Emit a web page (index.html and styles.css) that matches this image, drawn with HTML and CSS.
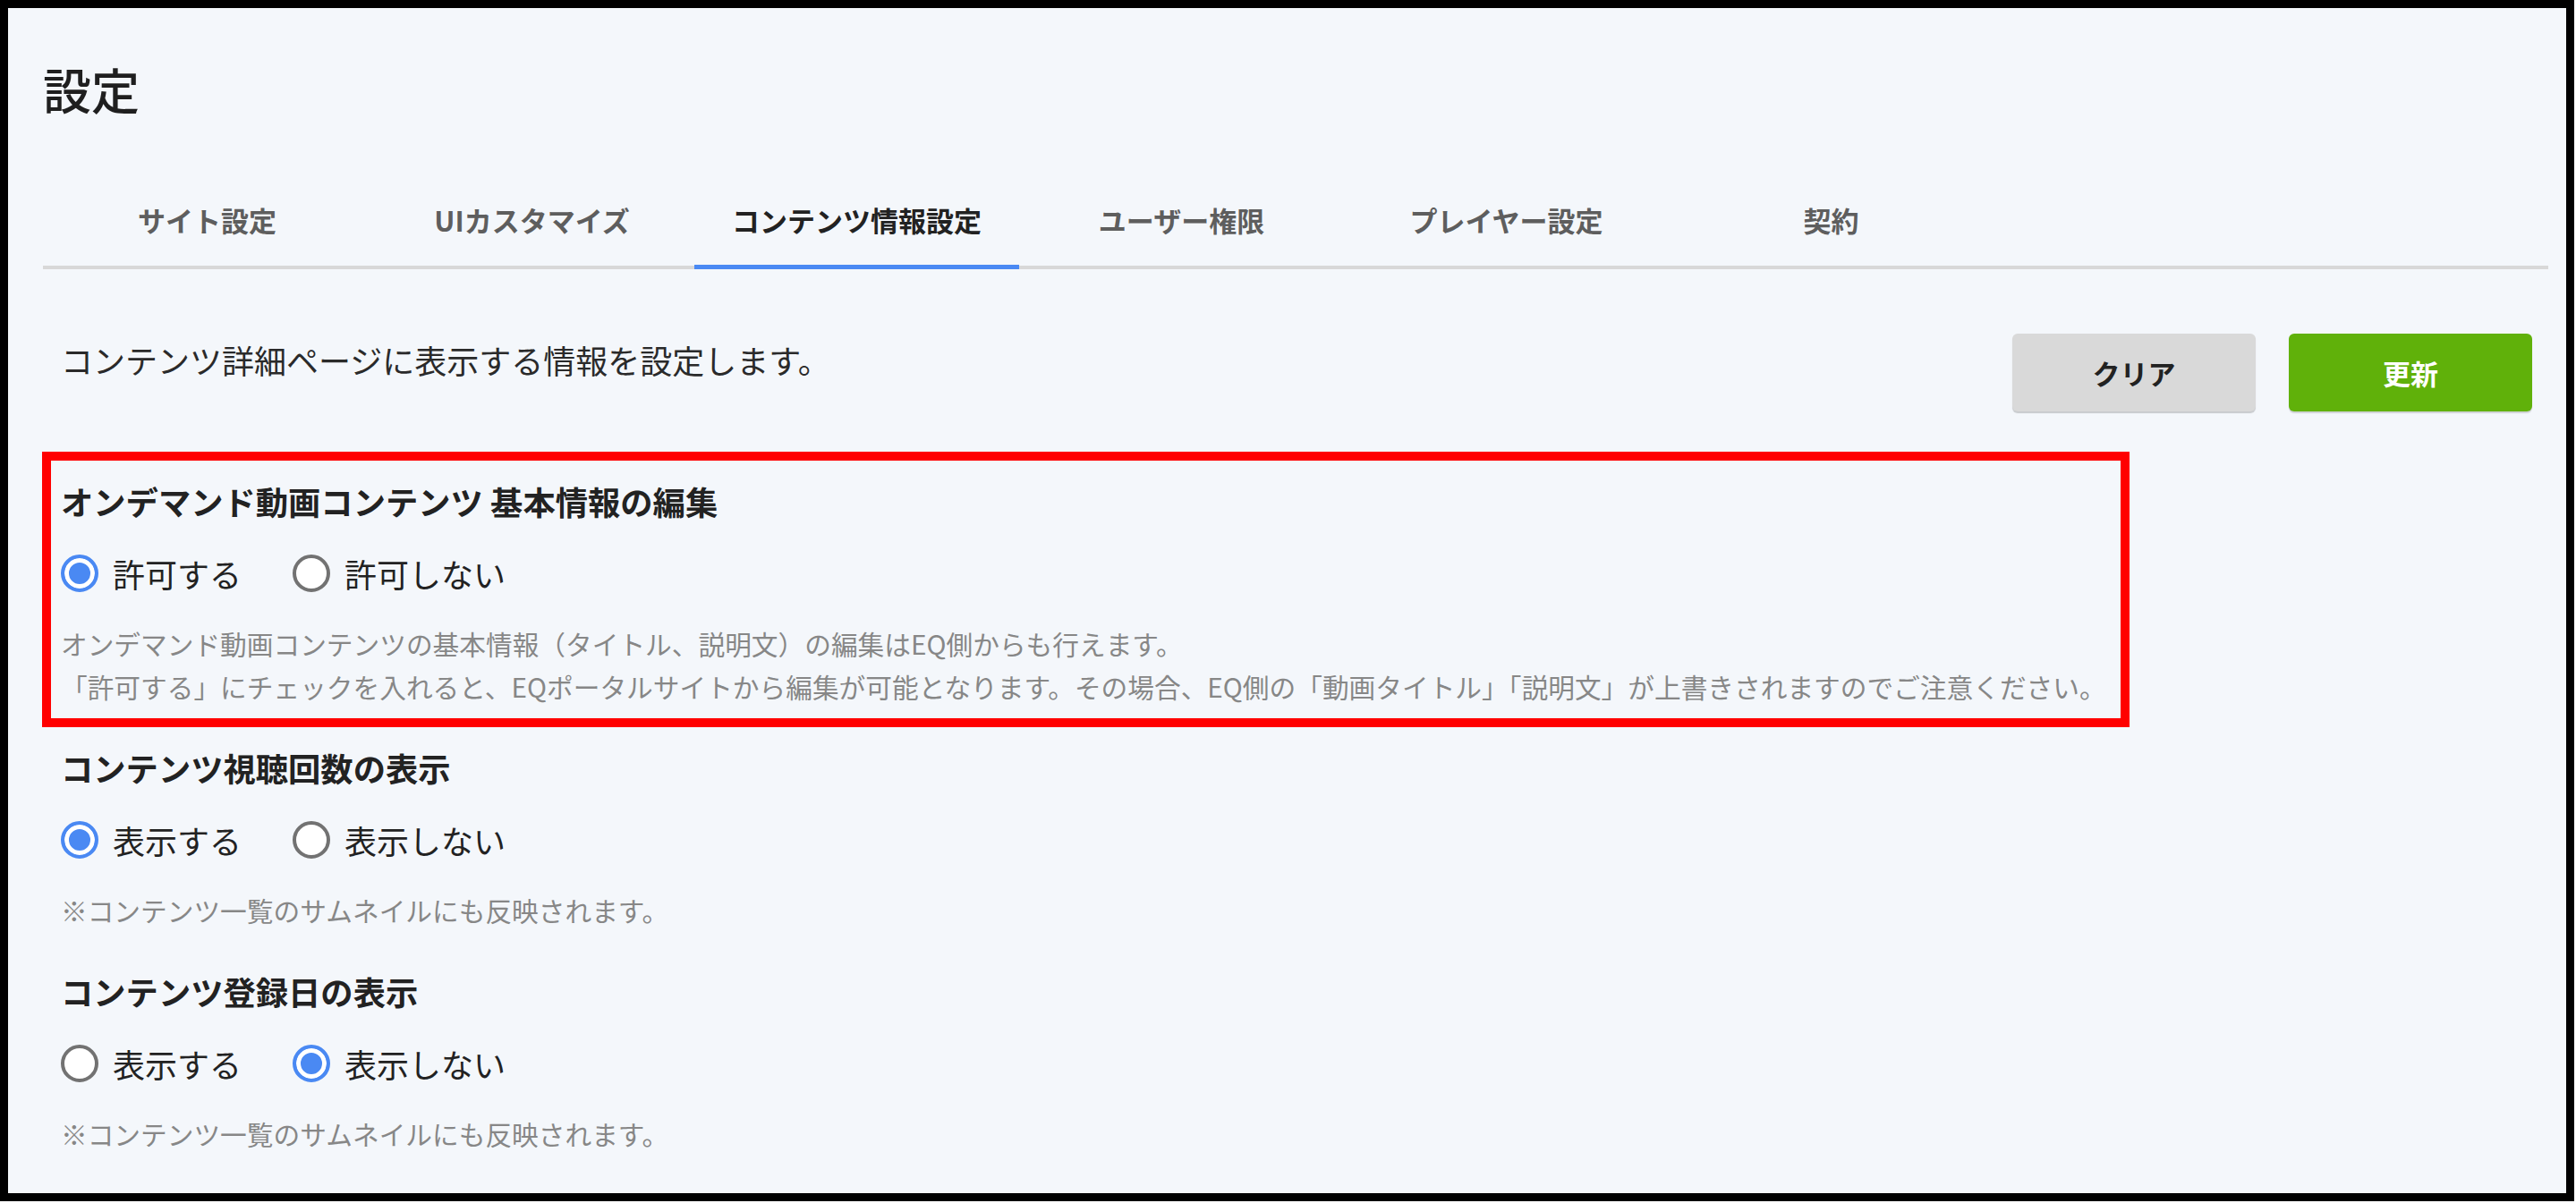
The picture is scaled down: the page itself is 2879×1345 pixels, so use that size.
FILE: index.html
```html
<!DOCTYPE html>
<html lang="ja">
<head>
    <meta charset="UTF-8">
    <meta name="viewport" content="width=device-width, initial-scale=1.0">
    <title>設定</title>
    <link rel="stylesheet" href="styles.css">
</head>
<body>
    <div class="frame">
        <h1 class="page-title">設定</h1>

        <nav class="tabs">
            <a class="tab">サイト設定</a>
            <a class="tab">UIカスタマイズ</a>
            <a class="tab active">コンテンツ情報設定</a>
            <a class="tab">ユーザー権限</a>
            <a class="tab">プレイヤー設定</a>
            <a class="tab">契約</a>
        </nav>

        <div class="panel">
            <div class="panel-head">
                <p class="lead">コンテンツ詳細ページに表示する情報を設定します。</p>
                <div class="actions">
                    <button type="button" class="btn btn-clear">クリア</button>
                    <button type="button" class="btn btn-update">更新</button>
                </div>
            </div>

            <section class="setting highlight">
                <h3 class="setting-title">オンデマンド動画コンテンツ 基本情報の編集</h3>
                <div class="options">
                    <label class="option"><input type="radio" name="editInfo" checked><span>許可する</span></label>
                    <label class="option"><input type="radio" name="editInfo"><span>許可しない</span></label>
                </div>
                <p class="note">オンデマンド動画コンテンツの基本情報（タイトル、説明文）の編集はEQ側からも行えます。<br>「許可する」にチェックを入れると、EQポータルサイトから編集が可能となります。その場合、EQ側の「動画タイトル」「説明文」が上書きされますのでご注意ください。</p>
            </section>

            <section class="setting">
                <h3 class="setting-title">コンテンツ視聴回数の表示</h3>
                <div class="options">
                    <label class="option"><input type="radio" name="viewCount" checked><span>表示する</span></label>
                    <label class="option"><input type="radio" name="viewCount"><span>表示しない</span></label>
                </div>
                <p class="note">※コンテンツ一覧のサムネイルにも反映されます。</p>
            </section>

            <section class="setting">
                <h3 class="setting-title">コンテンツ登録日の表示</h3>
                <div class="options">
                    <label class="option"><input type="radio" name="createdAt"><span>表示する</span></label>
                    <label class="option"><input type="radio" name="createdAt" checked><span>表示しない</span></label>
                </div>
                <p class="note">※コンテンツ一覧のサムネイルにも反映されます。</p>
            </section>
        </div>
    </div>
</body>
</html>
```

FILE: styles.css
```css
html, body {
    margin: 0;
    padding: 0;
    background-color: #fff;
}
body {
    font-family: "Noto Sans CJK JP", "Noto Sans", sans-serif;
    color: #222;
}
.frame {
    box-sizing: border-box;
    width: 2877px;
    height: 1343px;
    border: 9px solid #000;
    background-color: #f4f7fb;
    padding: 59px 20px 0 39px;
    overflow: hidden;
}
.page-title {
    margin: 0;
    font-size: 54px;
    line-height: 64px;
    font-weight: 500;
    color: #1f1f1f;
}

/* tabs */
.tabs {
    display: flex;
    margin-top: 82px;
    padding-left: 2px;
    border-bottom: 4px solid #d8d8d8;
}
.tab {
    width: 363px;
    text-align: center;
    font-size: 31px;
    line-height: 44px;
    font-weight: 700;
    color: #5e5e5e;
    padding: 10px 0 28px;
    border-bottom: 5px solid transparent;
    margin-bottom: -4px;
    cursor: pointer;
}
.tab.active {
    color: #222;
    border-bottom-color: #4a89f3;
}

/* panel */
.panel {
    padding: 0 18px 0 20px;
}
.panel-head {
    display: flex;
    justify-content: space-between;
    align-items: flex-start;
    margin-top: 72px;
}
.lead {
    margin: 4px 0 0;
    font-size: 36px;
    line-height: 50px;
    color: #2a2a2a;
}
.actions {
    display: flex;
    gap: 37px;
}
.btn {
    width: 272px;
    height: 87px;
    border: none;
    border-radius: 6px;
    font-family: inherit;
    font-size: 31px;
    font-weight: 700;
    cursor: pointer;
}
.btn-clear {
    background-color: #d9d9d9;
    color: #222;
    box-shadow: 0 2px 1px rgba(0, 0, 0, 0.18);
}
.btn-update {
    background-color: #60b10a;
    color: #fff;
    box-shadow: 0 2px 1px rgba(0, 0, 0, 0.15);
}

/* settings */
.setting {
    margin-bottom: 41px;
}
.setting.highlight {
    box-sizing: border-box;
    width: 2333px;
    border: 10px solid #ff0000;
    margin: 45px 0 20px -21px;
    padding: 20px 0 11px 11px;
}
.setting-title {
    margin: 0;
    font-size: 36.3px;
    line-height: 50px;
    font-weight: 700;
    color: #222;
}
.options {
    display: flex;
    align-items: center;
    height: 50px;
    margin-top: 31px;
}
.option {
    display: flex;
    align-items: center;
    margin-right: 57px;
    font-size: 36px;
    line-height: 50px;
    color: #222;
    cursor: pointer;
}
.option input {
    appearance: none;
    -webkit-appearance: none;
    box-sizing: border-box;
    width: 42px;
    height: 42px;
    margin: 0 16px 0 0;
    border: 4px solid #727272;
    border-radius: 50%;
    background-color: #fff;
}
.option input:checked {
    border-color: #4a89f3;
    background-color: #4a89f3;
    box-shadow: inset 0 0 0 5px #fff;
}
.note {
    margin: 30px 0 0;
    font-size: 29.7px;
    line-height: 48px;
    color: #878787;
    white-space: nowrap;
}
```
